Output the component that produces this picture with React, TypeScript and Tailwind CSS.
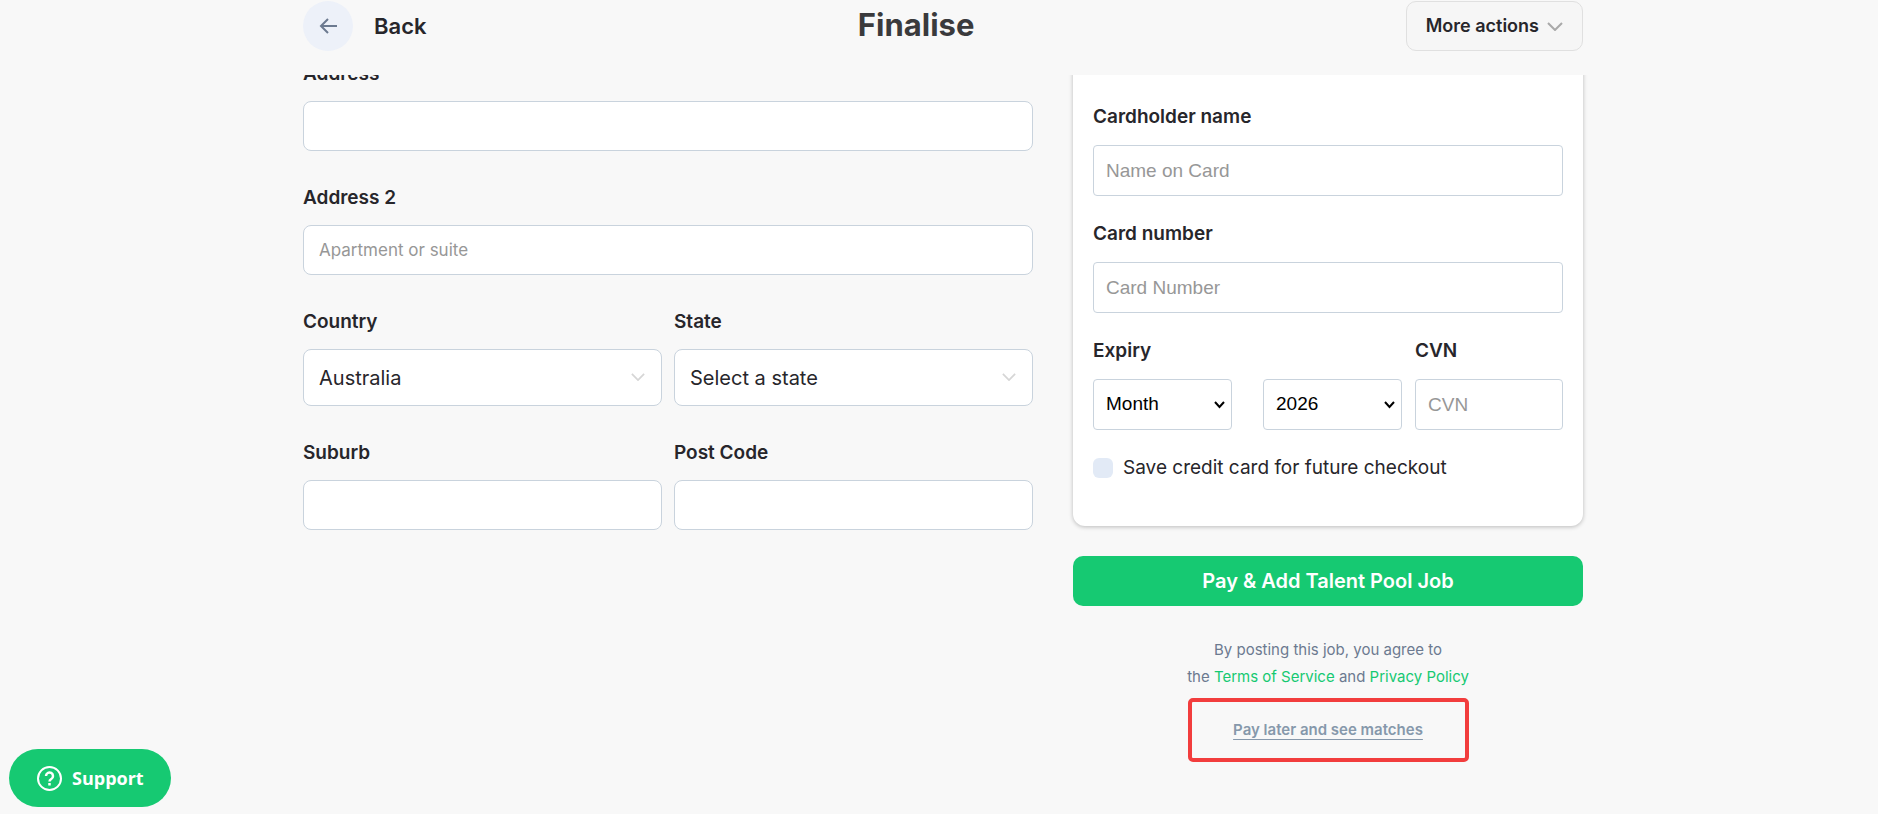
import type { ReactNode } from "react";

const fieldClass =
    "block w-full h-[50px] px-[15px] bg-white border border-[#c9d3dd] rounded-lg text-[17px] placeholder:text-[#979797]";
const cardFieldClass =
    "block w-full h-[51px] px-3 bg-white border border-[#c9d3dd] rounded text-[19px] text-black font-['Liberation_Sans',Arial,sans-serif] placeholder:text-[#979797]";

function Chevron({ className }: { className: string }) {
    return (
        <svg
            className={className}
            viewBox="0 0 16 9"
            fill="none"
            stroke="currentColor"
            strokeWidth="2"
        >
            <path d="M1 1l7 7 7-7" />
        </svg>
    );
}

function Field({
    id,
    label,
    children,
}: {
    id: string;
    label: string;
    children: ReactNode;
}) {
    return (
        <div className="min-w-0 flex-1">
            <label
                htmlFor={id}
                className="block mb-[15px] text-[19px] leading-6 font-semibold"
            >
                {label}
            </label>
            {children}
        </div>
    );
}

function CardField({
    id,
    label,
    children,
}: {
    id: string;
    label: string;
    children: ReactNode;
}) {
    return (
        <div>
            <label
                htmlFor={id}
                className="block mb-4 text-[19px] leading-6 font-semibold"
            >
                {label}
            </label>
            {children}
        </div>
    );
}

function SelectBox({ id, options }: { id: string; options: string[] }) {
    return (
        <div className="relative">
            <select
                id={id}
                className="block w-full h-[57px] px-[15px] appearance-none bg-white border border-[#c9d3dd] rounded-lg text-xl"
            >
                {options.map((option) => (
                    <option key={option}>{option}</option>
                ))}
            </select>
            <Chevron className="absolute right-[17px] top-6 w-[14px] h-2 text-[#d6d6d6] pointer-events-none" />
        </div>
    );
}

function CardSelect({
    id,
    label,
    options,
}: {
    id: string;
    label?: string;
    options: string[];
}) {
    return (
        <div className="relative">
            <select
                id={id}
                aria-label={label}
                className={`${cardFieldClass} appearance-none`}
            >
                {options.map((option) => (
                    <option key={option}>{option}</option>
                ))}
            </select>
            <svg
                className="absolute right-[7px] top-[22px] w-[11px] h-2 text-black pointer-events-none"
                viewBox="0 0 11 8"
                fill="none"
                stroke="currentColor"
                strokeWidth="2"
            >
                <path d="M1 1l4.500 5L10 1" />
            </svg>
        </div>
    );
}

function Header() {
    return (
        <header className="pl-2 pt-px h-[75px]">
            <div className="max-w-[1280px] mx-auto flex items-start justify-between">
                <button className="flex items-center gap-[21px] text-[22px] font-semibold">
                    <span className="flex items-center justify-center size-[50px] rounded-full bg-[#edf1f9] text-[#6c7a90]">
                        <svg
                            className="w-[18px] h-4"
                            viewBox="0 0 18 16"
                            fill="none"
                            stroke="currentColor"
                            strokeWidth="2"
                        >
                            <path d="M18 8H2M9 1L2 8l7 7" />
                        </svg>
                    </span>
                    Back
                </button>
                <h1 className="text-[31px] leading-[48px] font-bold text-[#3a3a3c]">
                    Finalise
                </h1>
                <button className="flex items-center gap-2 h-[50px] px-[19px] bg-[#f6f6f6] border border-[#e0e0e0] rounded-[10px] text-lg font-semibold">
                    More actions
                    <Chevron className="w-4 h-[9px] text-[#a9a9a9]" />
                </button>
            </div>
        </header>
    );
}

function AddressForm() {
    return (
        <form className="flex-1 flex flex-col gap-[35px]">
            <Field id="address" label="Address">
                <input id="address" className={fieldClass} />
            </Field>
            <Field id="address2" label="Address 2">
                <input
                    id="address2"
                    placeholder="Apartment or suite"
                    className={fieldClass}
                />
            </Field>
            <div className="flex gap-3">
                <Field id="country" label="Country">
                    <SelectBox id="country" options={["Australia"]} />
                </Field>
                <Field id="state" label="State">
                    <SelectBox id="state" options={["Select a state"]} />
                </Field>
            </div>
            <div className="flex gap-3">
                <Field id="suburb" label="Suburb">
                    <input id="suburb" className={fieldClass} />
                </Field>
                <Field id="postcode" label="Post Code">
                    <input id="postcode" className={fieldClass} />
                </Field>
            </div>
        </form>
    );
}

function PaymentCard() {
    return (
        <div className="flex flex-col gap-[26px] px-5 pt-[43px] pb-[46px] bg-white rounded-xl shadow-[0_1px_4px_rgba(0,0,0,0.25)]">
            <CardField id="cardholder" label="Cardholder name">
                <input
                    id="cardholder"
                    placeholder="Name on Card"
                    className={cardFieldClass}
                />
            </CardField>
            <CardField id="cardnumber" label="Card number">
                <input
                    id="cardnumber"
                    placeholder="Card Number"
                    className={cardFieldClass}
                />
            </CardField>
            <div className="grid grid-cols-[1fr_148px] gap-[13px]">
                <CardField id="month" label="Expiry">
                    <div className="grid grid-cols-2 gap-[31px]">
                        <CardSelect id="month" options={["Month"]} />
                        <CardSelect
                            id="year"
                            label="Expiry year"
                            options={["2026"]}
                        />
                    </div>
                </CardField>
                <CardField id="cvn" label="CVN">
                    <input
                        id="cvn"
                        placeholder="CVN"
                        className={cardFieldClass}
                    />
                </CardField>
            </div>
            <label className="flex items-center gap-[10px] text-[19px] leading-6">
                <input
                    type="checkbox"
                    className="appearance-none size-5 rounded-md bg-[#e2eaf6]"
                />
                Save credit card for future checkout
            </label>
        </div>
    );
}

export default function App() {
    return (
        <div className="min-h-screen bg-[#f8f8f8] text-[#27262b] font-[Inter,sans-serif]">
            <Header />
            {/* the form is scrolled slightly under the header */}
            <main className="pl-2 overflow-hidden">
                <div className="max-w-[1280px] mx-auto -mt-[13px] flex items-start gap-10">
                    <AddressForm />
                    <section className="w-[510px]">
                        <PaymentCard />
                        <button className="block w-full h-[50px] mt-[30px] rounded-[10px] bg-[#16c972] text-white text-xl font-semibold">
                            Pay &amp; Add Talent Pool Job
                        </button>
                        <p className="mt-[30px] text-center text-[15px] leading-[27px] text-[#6c7a90]">
                            By posting this job, you agree to
                            <br />
                            the{" "}
                            <a href="#" className="text-[#16c972]">
                                Terms of Service
                            </a>{" "}
                            and{" "}
                            <a href="#" className="text-[#16c972]">
                                Privacy Policy
                            </a>
                        </p>
                        <div className="flex items-center justify-center w-[281px] h-16 mt-2 mx-auto border-4 border-[#f23d3d] rounded-[5px]">
                            <a
                                href="#"
                                className="text-[15px] font-semibold text-[#8698ab] underline decoration-1 underline-offset-4"
                            >
                                Pay later and see matches
                            </a>
                        </div>
                    </section>
                </div>
            </main>
            <button className="fixed left-[9px] bottom-[7px] flex items-center gap-[10px] h-[58px] pl-7 pr-[27px] rounded-full bg-[#16c972] text-white text-lg font-bold font-['Open_Sans',sans-serif]">
                <svg
                    className="size-[25px]"
                    viewBox="0 0 25 25"
                    fill="none"
                    stroke="currentColor"
                    strokeWidth="2"
                >
                    <circle cx="12.500" cy="12.500" r="11.500" />
                    <path
                        strokeWidth="2.500"
                        d="M9 10a3.500 3.500 0 1 1 5.300 3c-1.200.7-1.800 1.200-1.800 2.500M12.500 17v2.500"
                    />
                </svg>
                Support
            </button>
        </div>
    );
}
